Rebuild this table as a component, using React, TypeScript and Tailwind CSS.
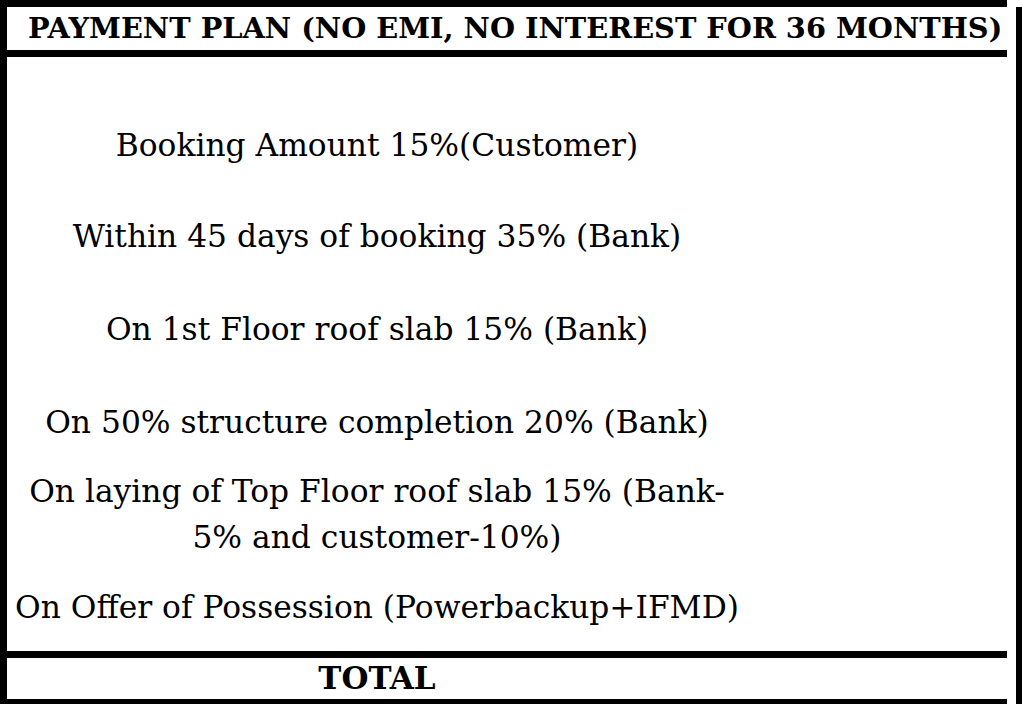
import React from "react";

export default function App() {
  const rows: { text: React.ReactNode; mt: string }[] = [
    { text: "Booking Amount 15%(Customer)", mt: "mt-[65px]" },
    { text: "Within 45 days of booking 35% (Bank)", mt: "mt-[45px]" },
    { text: "On 1st Floor roof slab 15% (Bank)", mt: "mt-[47px]" },
    { text: "On 50% structure completion 20% (Bank)", mt: "mt-[47px]" },
    {
      text: (
        <>
          On laying of Top Floor roof slab 15% (Bank-
          <br />
          5% and customer-10%)
        </>
      ),
      mt: "mt-[23px]",
    },
    { text: "On Offer of Possession (Powerbackup+IFMD)", mt: "mt-[24px]" },
  ];

  return (
    <div className="w-[1022px] h-[704px] bg-white flex overflow-hidden text-black font-['DejaVu_Serif',serif]">
      <div className="w-[1007px] h-[704px] border-l-[7px] border-t-[7px] border-black flex flex-col">
        <div className="h-[43px] pl-[21px] text-[28.8px] leading-[43px] font-bold whitespace-nowrap">
          PAYMENT PLAN (NO EMI, NO INTEREST FOR 36 MONTHS)
        </div>
        <div className="h-[7px] bg-black" />
        <div className="flex-1 w-[740px] flex flex-col items-center text-[31.3px] leading-[46px] text-center">
          {rows.map((r, i) => (
            <div key={i} className={`${r.mt} whitespace-nowrap`}>
              {r.text}
            </div>
          ))}
        </div>
        <div className="h-[7px] bg-black" />
        <div className="h-[41px] w-[740px] text-center text-[31px] leading-[41px] font-bold">
          TOTAL
        </div>
        <div className="h-[5px] bg-black" />
      </div>
      <div className="w-[9px]" />
      <div className="w-[6px] mt-[7px] bg-black" />
    </div>
  );
}
